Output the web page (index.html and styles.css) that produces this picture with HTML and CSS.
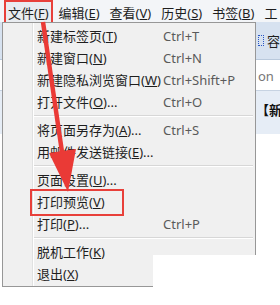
FILE: index.html
```html
<!DOCTYPE html>
<html lang="zh-CN">
<head>
    <meta charset="UTF-8">
    <meta name="viewport" content="width=device-width, initial-scale=1.0">
    <title>文件菜单</title>
    <link rel="stylesheet" href="styles.css">
</head>
<body>
    <div class="window">
        <div class="menubar">
            <span class="mb-item active">文件(<u>F</u>)</span>
            <span class="mb-item">编辑(<u>E</u>)</span>
            <span class="mb-item">查看(<u>V</u>)</span>
            <span class="mb-item">历史(<u>S</u>)</span>
            <span class="mb-item">书签(<u>B</u>)</span>
            <span class="mb-item">工</span>
        </div>

        <div class="toolbar">
            <span class="tb-icon"></span>
            <span>容</span>
        </div>
        <div class="addressbar">on</div>
        <div class="tabstrip">【新</div>

        <div class="menu">
            <div class="item"><span class="label">新建标签页(<u>T</u>)</span><span class="key">Ctrl+T</span></div>
            <div class="item"><span class="label">新建窗口(<u>N</u>)</span><span class="key">Ctrl+N</span></div>
            <div class="item"><span class="label">新建隐私浏览窗口(<u>W</u>)</span><span class="key">Ctrl+Shift+P</span></div>
            <div class="item"><span class="label">打开文件(<u>O</u>)...</span><span class="key">Ctrl+O</span></div>
            <div class="sep"></div>
            <div class="item"><span class="label">将页面另存为(<u>A</u>)...</span><span class="key">Ctrl+S</span></div>
            <div class="item"><span class="label">用邮件发送链接(<u>E</u>)...</span></div>
            <div class="sep"></div>
            <div class="item"><span class="label">页面设置(<u>U</u>)...</span></div>
            <div class="item marked"><span class="label">打印预览(<u>V</u>)</span><span class="annot"></span></div>
            <div class="item"><span class="label">打印(<u>P</u>)...</span><span class="key">Ctrl+P</span></div>
            <div class="sep"></div>
            <div class="item"><span class="label">脱机工作(<u>K</u>)</span></div>
            <div class="item"><span class="label">退出(<u>X</u>)</span></div>
        </div>

        <div class="cover"></div>

        <svg class="arrow" width="280" height="305" viewBox="0 0 280 305">
            <line x1="43" y1="22" x2="62" y2="152" stroke="#ea3a36" stroke-width="4.5"/>
            <polygon points="49,153 76,149 68,192" fill="#ea3a36"/>
        </svg>
    </div>
</body>
</html>
```

FILE: styles.css
```css
body {
    margin: 0;
    background-color: #fff;
    font-family: "Noto Sans", "Noto Sans CJK SC", sans-serif;
    font-size: 13px;
    color: #1e1e1e;
}

.window {
    position: relative;
    width: 280px;
    height: 305px;
    overflow: hidden;
    background-color: #fff;
}

/* menu bar */
.menubar {
    display: flex;
    gap: 2px;
    height: 22px;
    padding-left: 4px;
    background-color: #f3f5f8;
    white-space: nowrap;
}

.mb-item {
    flex: none;
    padding: 1px 2px 0;
    line-height: 20px;
    border: 2px solid transparent;
    border-bottom: 0;
}

.mb-item.active {
    border: 2px solid #e8403a;
    background-color: #e9ecf0;
    height: 19px;
}

/* page behind the menu */
.toolbar {
    display: flex;
    align-items: center;
    gap: 3px;
    height: 37px;
    padding-left: 258px;
    background-color: #d7e2f0;
    border-bottom: 1px solid #b9c9dc;
    white-space: nowrap;
}

.tb-icon {
    width: 4px;
    height: 9px;
    border: 1px dotted #2a56c6;
    flex: none;
}

.addressbar {
    height: 30px;
    line-height: 33px;
    padding-left: 258px;
    color: #777;
    background-color: #fff;
    border-bottom: 1px solid #c7d3e2;
    white-space: nowrap;
}

.tabstrip {
    height: 43px;
    line-height: 38px;
    padding-left: 256px;
    font-weight: bold;
    color: #111;
    background-color: #e6edf6;
    white-space: nowrap;
}

/* dropdown */
.menu {
    position: absolute;
    left: 2px;
    top: 22px;
    width: 248px;
    padding: 2px 2px 1px;
    border: 1px solid #979797;
    background-color: #f0f0f0;
    background-image: linear-gradient(to right, transparent 29px, #e0e1e1 29px, #e0e1e1 30px, #fff 30px, #fff 31px, transparent 31px);
}

.item {
    position: relative;
    display: flex;
    height: 22px;
    line-height: 22px;
    padding-left: 32px;
    white-space: nowrap;
}

.label {
    width: 126px;
    flex: none;
}

.key {
    color: #5a5a5a;
}

.sep {
    height: 1px;
    margin: 2px 0 2px 29px;
    background-color: #d7d7d7;
    border-bottom: 1px solid #fff;
}

.annot {
    position: absolute;
    left: 25px;
    top: -2px;
    width: 90px;
    height: 23px;
    border: 2px solid #e8403a;
}

.cover {
    position: absolute;
    left: 153px;
    top: 255px;
    width: 127px;
    height: 50px;
    background-color: #fff;
}

.arrow {
    position: absolute;
    left: 0;
    top: 0;
}
```
